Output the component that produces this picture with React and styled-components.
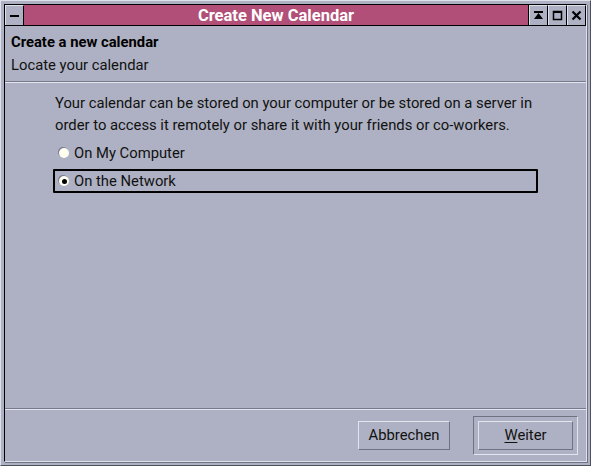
import React, { useState } from 'react'
import styled, { createGlobalStyle } from 'styled-components'

const Global = createGlobalStyle`
  html, body { margin: 0; padding: 0; background: #aeb1c3; }
  body { font-family: Roboto, "Liberation Sans", sans-serif; }
`

const Frame = styled.div`
  width: 591px;
  height: 466px;
  box-sizing: border-box;
  background: #aeb1c3;
  border-top: 1px solid #dfe1ea;
  border-left: 1px solid #dfe1ea;
  border-right: 1px solid #4c4f5c;
  border-bottom: 1px solid #4c4f5c;
  padding: 3px;
  display: flex;
`

const Window = styled.div`
  flex: 1;
  display: flex;
  flex-direction: column;
  border-left: 1px solid #000;
  border-top: 1px solid #000;
  border-right: 1px solid #dfe1ea;
  border-bottom: 1px solid #dfe1ea;
  box-shadow: 1px 1px 0 #6f7283;
`

const TitleBar = styled.div`
  display: flex;
  height: 20px;
  border-bottom: 1px solid #000;
`

const TitleBtn = styled.div`
  width: 19px;
  height: 20px;
  box-sizing: border-box;
  background: #aeb1c3;
  border-top: 1px solid #dfe1ea;
  border-left: 1px solid #dfe1ea;
  border-right: 1px solid #000;
  display: flex;
  align-items: center;
  justify-content: center;
`

const Title = styled.div`
  flex: 1;
  background: #b24f79;
  color: #fff;
  font-weight: bold;
  font-size: 16.5px;
  display: flex;
  align-items: center;
  justify-content: center;
  border-right: 1px solid #000;
`

const Header = styled.div`
  padding: 7px 6px 0;
  height: 48px;
  border-bottom: 1px solid #777a8c;
  box-shadow: 0 1px 0 #e3e5ee;
`

const HeadTitle = styled.div`
  font-weight: bold;
  font-size: 14.8px;
  color: #000;
  line-height: 18px;
`

const HeadSub = styled.div`
  font-size: 14.8px;
  color: #111;
  line-height: 18px;
  margin-top: 5px;
`

const Body = styled.div`
  flex: 1;
  padding: 10px 0 0 50px;
`

const Para = styled.p`
  margin: 0;
  font-size: 14.8px;
  line-height: 22px;
  color: #111;
  width: 490px;
`

const Options = styled.div`
  margin: 5px 0 0 -2px;
  width: 485px;
  display: flex;
  flex-direction: column;
  gap: 4px;
`

const Option = styled.label`
  display: flex;
  align-items: center;
  gap: 5px;
  height: 24px;
  box-sizing: border-box;
  padding-left: 4px;
  font-size: 14.8px;
  color: #111;
  border: 2px solid ${p => (p.$focus ? '#000' : 'transparent')};
  border-radius: 1px;
  cursor: default;
`

const Radio = styled.span`
  width: 10px;
  height: 10px;
  border-radius: 50%;
  background: #fffff0;
  box-shadow: -1px -1px 0 #7a7d8f;
  display: flex;
  align-items: center;
  justify-content: center;
  &::after {
    content: '';
    width: 5px;
    height: 5px;
    border-radius: 50%;
    background: #000;
    display: ${p => (p.$on ? 'block' : 'none')};
  }
`

const Footer = styled.div`
  height: 52px;
  border-top: 1px solid #777a8c;
  box-shadow: inset 0 1px 0 #e3e5ee;
  display: flex;
  align-items: center;
  justify-content: flex-end;
  padding-right: 8px;
  gap: 23px;
`

const Button = styled.button`
  font-family: Roboto, "Liberation Sans", sans-serif;
  font-size: 14.8px;
  color: #111;
  background: #aeb1c3;
  height: 29px;
  width: ${p => p.$w}px;
  border-top: 1px solid #e3e5ee;
  border-left: 1px solid #e3e5ee;
  border-right: 1px solid #6f7283;
  border-bottom: 1px solid #6f7283;
  padding: 0;
  u { text-decoration: underline; text-underline-offset: 2px; }
`

const DefaultRing = styled.div`
  padding: 4px;
  border-top: 1px solid #6f7283;
  border-left: 1px solid #6f7283;
  border-right: 1px solid #e3e5ee;
  border-bottom: 1px solid #e3e5ee;
  display: flex;
`

function App() {
  const [choice, setChoice] = useState('net')
  return (
    <>
      <Global />
      <Frame>
        <Window>
          <TitleBar>
            <TitleBtn>
              <svg width="11" height="11"><rect x="1" y="5" width="9" height="2" fill="#000" /></svg>
            </TitleBtn>
            <Title>Create New Calendar</Title>
            <TitleBtn>
              <svg width="11" height="11">
                <rect x="1" y="1" width="9" height="2" fill="#000" />
                <polygon points="5.5,3 10,9 1,9" fill="#000" />
              </svg>
            </TitleBtn>
            <TitleBtn>
              <svg width="11" height="11"><rect x="1.5" y="1.5" width="8" height="8" fill="none" stroke="#000" strokeWidth="1.5" /><rect x="1" y="1" width="9" height="2" fill="#000" /></svg>
            </TitleBtn>
            <TitleBtn>
              <svg width="11" height="11"><path d="M1.5 1.5 L9.5 9.5 M9.5 1.5 L1.5 9.5" stroke="#000" strokeWidth="2.2" /></svg>
            </TitleBtn>
          </TitleBar>
          <Header>
            <HeadTitle>Create a new calendar</HeadTitle>
            <HeadSub>Locate your calendar</HeadSub>
          </Header>
          <Body>
            <Para>
              Your calendar can be stored on your computer or be stored on a server in order to access it remotely or share it with your friends or co-workers.
            </Para>
            <Options>
              <Option $focus={choice === 'local'} onClick={() => setChoice('local')}>
                <Radio $on={choice === 'local'} />
                On My Computer
              </Option>
              <Option $focus={choice === 'net'} onClick={() => setChoice('net')}>
                <Radio $on={choice === 'net'} />
                On the Network
              </Option>
            </Options>
          </Body>
          <Footer>
            <Button $w={92}>Abbrechen</Button>
            <DefaultRing>
              <Button $w={95}><u>W</u>eiter</Button>
            </DefaultRing>
          </Footer>
        </Window>
      </Frame>
    </>
  )
}

export default App
